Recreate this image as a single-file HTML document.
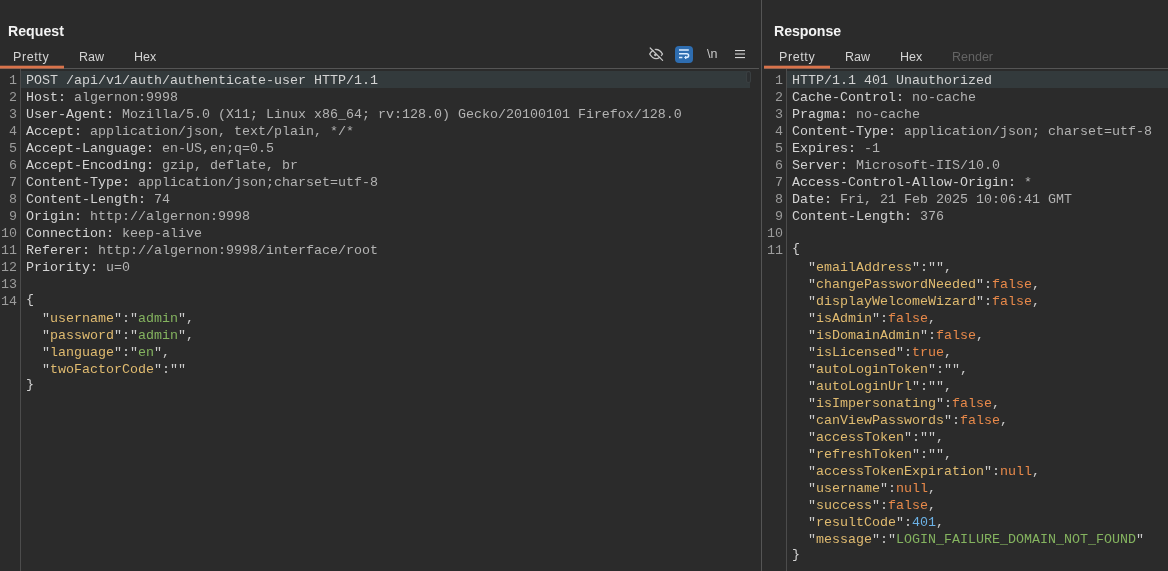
<!DOCTYPE html>
<html>
<head>
<meta charset="utf-8">
<title>Burp</title>
<style>
html,body{margin:0;padding:0;}
body{width:1168px;height:571px;background:#2b2b2b;overflow:hidden;position:relative;font-family:"Liberation Sans",sans-serif;}
.abs{position:absolute;}
.title{position:absolute;top:22px;font-size:15px;font-weight:bold;color:#f2f2f2;line-height:18px;transform:matrix(0.945,0.0004,0,1.0,0,0);transform-origin:0 14px;}
.tab{position:absolute;top:49px;font-size:12.5px;color:#d4d4d4;line-height:16px;}
.tab.dim{color:#646464;}
.hline{position:absolute;height:1px;background:#555555;top:68px;}
.oline{position:absolute;height:2px;background:#d9734b;top:66px;}
.oline:before{content:"";position:absolute;left:0;right:0;top:-1px;height:1px;background:#d9734b;opacity:0.3;}
.oline:after{content:"";position:absolute;left:0;right:0;top:2px;height:1px;background:#d9734b;opacity:0.5;}
.vline{position:absolute;width:1px;background:#555555;}
.hl{position:absolute;height:17px;background:#333a3c;top:71px;}
pre{margin:0;position:absolute;top:72px;font-family:"Liberation Mono",monospace;font-size:13.3333px;line-height:17px;color:#cdcdcd;white-space:pre;}
pre.num{text-align:right;color:#9c9c9c;}
.br{position:relative;top:-2px;color:#d2d2d2;}
.k{color:#e0bb70;}
.s{color:#84b35f;}
.b{color:#e8894a;}
.n{color:#6cb2e6;}
.h{color:#d3d3d3;}
.v{color:#b3b3b3;}
</style>
</head>
<body>
<div id="root" style="position:absolute;left:0;top:0;width:1168px;height:571px;will-change:transform;">
<!-- LEFT PANEL -->
<div class="title" style="left:8px;">Request</div>
<div class="tab" style="left:13px;letter-spacing:0.6px;">Pretty</div>
<div class="tab" style="left:79px;">Raw</div>
<div class="tab" style="left:134px;">Hex</div>
<div class="hline" style="left:0;width:759px;"></div>
<div class="oline" style="left:0;width:64px;"></div>
<div class="hl" style="left:21px;width:729px;"></div>
<div class="vline" style="left:20px;top:69px;height:502px;background:#4c4c4c;"></div>
<div class="abs" style="left:747px;top:72px;width:3px;height:10px;border-radius:2px;background:#2c2f31;box-shadow:0 0 0 1px #3a3f41;"></div>

<!-- toolbar icons -->
<svg class="abs" style="left:640px;top:40px;" width="120" height="28" viewBox="640 40 120 28" fill="none">
<g stroke="#c6c6c6" stroke-width="1.35" stroke-linecap="round" stroke-linejoin="round">
<path d="M649.7 54 C651.7 50.7 654 49.5 656.1 49.5 C658.2 49.5 660.5 50.7 662.5 54 C660.5 57.4 658.2 58.6 656.1 58.6 C654 58.6 651.7 57.4 649.7 54 Z"/>
<circle cx="655.3" cy="54.9" r="0.9" fill="#c6c6c6" stroke-width="0.8"/>
<path d="M651.3 47.1 L663.7 59.5" stroke="#2b2b2b" stroke-width="1.5" stroke-linecap="butt"/>
<path d="M650.2 48 L662.6 60.4" stroke-width="1.2"/>
</g>
<rect x="675" y="46" width="18" height="17" rx="4" ry="4" fill="#2e6db0"/>
<g stroke="#dcedff" stroke-width="1.5" stroke-linecap="butt" stroke-linejoin="round">
<path d="M679 50 H688.8"/>
<path d="M679 53.7 H686.6 C689.3 53.7 689.3 57.5 686.6 57.5 H685.4"/>
<path d="M679 57.5 H682.4"/>
<path d="M685.9 56.1 L684.5 57.5 L685.9 58.9 Z" stroke-width="0.8" fill="#dcedff"/>
</g>
<rect x="735" y="50" width="10" height="1.1" fill="#d4d4d4"/>
<rect x="735" y="53.45" width="10" height="1.1" fill="#d4d4d4"/>
<rect x="735" y="57" width="10" height="1.1" fill="#d4d4d4"/>
</svg>
<div class="abs" style="left:707px;top:46px;font-size:12.5px;color:#c8c8c8;line-height:16px;">\n</div>

<pre class="num" style="left:0;width:17px;">1
2
3
4
5
6
7
8
9
10
11
12
13
14</pre>
<pre style="left:26px;"><span class="h">POST /api/v1/auth/authenticate-user HTTP/1.1</span>
<span class="h">Host:</span><span class="v"> algernon:9998</span>
<span class="h">User-Agent:</span><span class="v"> Mozilla/5.0 (X11; Linux x86_64; rv:128.0) Gecko/20100101 Firefox/128.0</span>
<span class="h">Accept:</span><span class="v"> application/json, text/plain, */*</span>
<span class="h">Accept-Language:</span><span class="v"> en-US,en;q=0.5</span>
<span class="h">Accept-Encoding:</span><span class="v"> gzip, deflate, br</span>
<span class="h">Content-Type:</span><span class="v"> application/json;charset=utf-8</span>
<span class="h">Content-Length:</span><span class="v"> 74</span>
<span class="h">Origin:</span><span class="v"> http://algernon:9998</span>
<span class="h">Connection:</span><span class="v"> keep-alive</span>
<span class="h">Referer:</span><span class="v"> http://algernon:9998/interface/root</span>
<span class="h">Priority:</span><span class="v"> u=0</span>

<span class="br">{</span>
  "<span class="k">username</span>":"<span class="s">admin</span>",
  "<span class="k">password</span>":"<span class="s">admin</span>",
  "<span class="k">language</span>":"<span class="s">en</span>",
  "<span class="k">twoFactorCode</span>":""
<span class="br">}</span></pre>

<!-- DIVIDER -->
<div class="vline" style="left:761px;top:0;height:571px;"></div>

<!-- RIGHT PANEL -->
<div class="title" style="left:774px;letter-spacing:-0.1px;">Response</div>
<div class="tab" style="left:779px;letter-spacing:0.6px;">Pretty</div>
<div class="tab" style="left:845px;">Raw</div>
<div class="tab" style="left:900px;">Hex</div>
<div class="tab dim" style="left:952px;">Render</div>
<div class="hline" style="left:764px;width:404px;"></div>
<div class="oline" style="left:764px;width:66px;"></div>
<div class="hl" style="left:787px;width:381px;"></div>
<div class="vline" style="left:786px;top:69px;height:502px;background:#4c4c4c;"></div>

<pre class="num" style="left:764px;width:19px;">1
2
3
4
5
6
7
8
9
10
11</pre>
<pre style="left:792px;"><span class="h">HTTP/1.1 401 Unauthorized</span>
<span class="h">Cache-Control:</span><span class="v"> no-cache</span>
<span class="h">Pragma:</span><span class="v"> no-cache</span>
<span class="h">Content-Type:</span><span class="v"> application/json; charset=utf-8</span>
<span class="h">Expires:</span><span class="v"> -1</span>
<span class="h">Server:</span><span class="v"> Microsoft-IIS/10.0</span>
<span class="h">Access-Control-Allow-Origin:</span><span class="v"> *</span>
<span class="h">Date:</span><span class="v"> Fri, 21 Feb 2025 10:06:41 GMT</span>
<span class="h">Content-Length:</span><span class="v"> 376</span>

<span class="br">{</span>
  "<span class="k">emailAddress</span>":"",
  "<span class="k">changePasswordNeeded</span>":<span class="b">false</span>,
  "<span class="k">displayWelcomeWizard</span>":<span class="b">false</span>,
  "<span class="k">isAdmin</span>":<span class="b">false</span>,
  "<span class="k">isDomainAdmin</span>":<span class="b">false</span>,
  "<span class="k">isLicensed</span>":<span class="b">true</span>,
  "<span class="k">autoLoginToken</span>":"",
  "<span class="k">autoLoginUrl</span>":"",
  "<span class="k">isImpersonating</span>":<span class="b">false</span>,
  "<span class="k">canViewPasswords</span>":<span class="b">false</span>,
  "<span class="k">accessToken</span>":"",
  "<span class="k">refreshToken</span>":"",
  "<span class="k">accessTokenExpiration</span>":<span class="b">null</span>,
  "<span class="k">username</span>":<span class="b">null</span>,
  "<span class="k">success</span>":<span class="b">false</span>,
  "<span class="k">resultCode</span>":<span class="n">401</span>,
  "<span class="k">message</span>":"<span class="s">LOGIN_FAILURE_DOMAIN_NOT_FOUND</span>"
<span class="br">}</span></pre>
</div>
</body>
</html>
